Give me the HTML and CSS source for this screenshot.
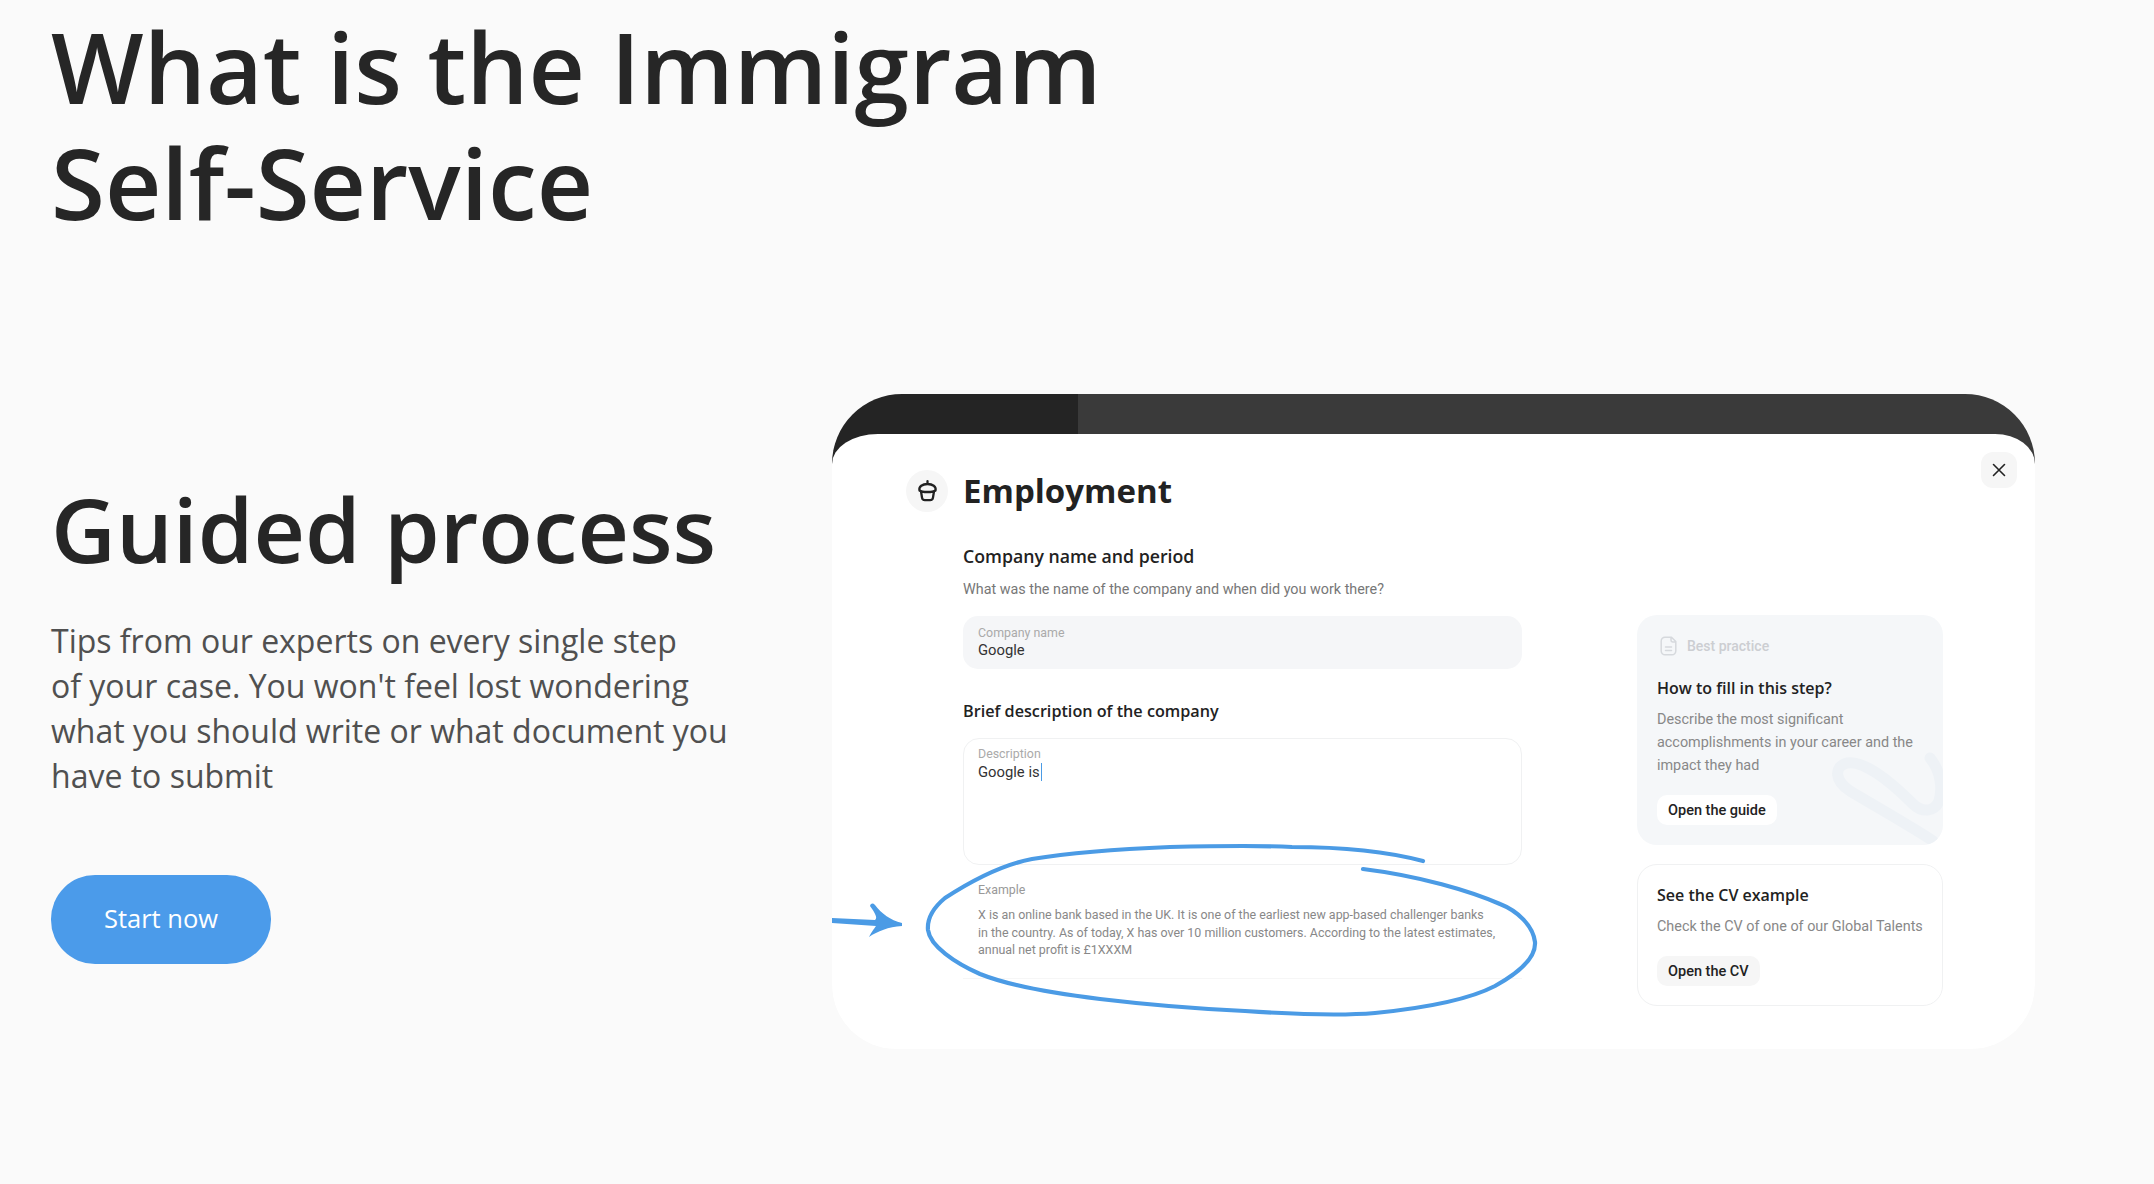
FILE: index.html
```html
<!DOCTYPE html>
<html lang="en">
<head>
<meta charset="utf-8">
<title>Immigram Self-Service</title>
<link rel="stylesheet" href="styles.css">
</head>
<body>
<main class="page">
  <h1 class="headline">What is the Immigram<br>Self-Service</h1>
  <section class="feature">
    <div class="intro">
      <h2 class="intro-title">Guided process</h2>
      <p class="intro-text">Tips from our experts on every single step<br>of your case. You won't feel lost wondering<br>what you should write or what document you<br>have to submit</p>
      <a class="cta">Start now</a>
    </div>
    <div class="window">
      <div class="panel">
        <button class="close" aria-label="Close">
          <svg width="14" height="14" viewBox="0 0 14 14"><path d="M1.5 1.5l11 11M12.5 1.5l-11 11" fill="none" stroke="#222" stroke-width="1.6" stroke-linecap="round"/></svg>
        </button>
        <header class="panel-head">
          <span class="bag">
            <svg width="21" height="22" viewBox="0 0 20 22"><path d="M10 1.200v2.600M2 10.500C1 6.500 5 4 10 4s9 2.500 8 6.500M2 10.500c2.500 2 13.500 2 16 0M3.600 12l.9 5.500a3 3 0 0 0 3 2.700h5a3 3 0 0 0 3-2.700l.9-5.500" fill="none" stroke="#222" stroke-width="2.300" stroke-linecap="round" stroke-linejoin="round"/></svg>
          </span>
          <h3 class="panel-title">Employment</h3>
        </header>
        <div class="panel-body">
          <div class="form">
            <h4 class="form-title">Company name and period</h4>
            <p class="form-hint">What was the name of the company and when did you work there?</p>
            <div class="field field-filled">
              <span class="field-label">Company name</span>
              <span class="field-value">Google</span>
            </div>
            <h4 class="form-title form-title-second">Brief description of the company</h4>
            <div class="field field-area">
              <span class="field-label">Description</span>
              <span class="field-value"><span class="caret">Google is</span></span>
            </div>
            <div class="example">
              <span class="field-label example-label">Example</span>
              <p class="example-text">X is an online bank based in the UK. It is one of the earliest new app-based challenger banks<br>in the country. As of today, X has over 10 million customers. According to the latest estimates,<br>annual net profit is £1XXXM</p>
            </div>
          </div>
          <aside class="side">
            <div class="card card-tint">
              <svg class="scribble" width="306" height="230" viewBox="0 0 306 230"><path d="M296 226C280 215 250 198 213 176C198 166 196 152 210 148C225 145 250 163 276 189C285 198 298 197 302 186C306 172 303 155 293 143" fill="none" stroke="#eef2f6" stroke-width="11" stroke-linecap="round"/></svg>
              <div class="card-tag">
                <svg width="17" height="20" viewBox="0 0 17 20"><path d="M5 1.200h6.500l4.300 4.300V15a3.800 3.800 0 0 1-3.800 3.800H5A3.800 3.800 0 0 1 1.200 15V5A3.800 3.800 0 0 1 5 1.200zM11 1.500V4a2 2 0 0 0 2 2h2.800M5.500 11h6M5.500 14.500h6" fill="none" stroke="#d6d9dd" stroke-width="1.500" stroke-linecap="round" stroke-linejoin="round"/></svg>
                <span>Best practice</span>
              </div>
              <h5 class="card-title">How to fill in this step?</h5>
              <p class="card-text">Describe the most significant accomplishments in your career and the impact they had</p>
              <a class="card-btn card-btn-white">Open the guide</a>
            </div>
            <div class="card card-line">
              <h5 class="card-title card-title-flush">See the CV example</h5>
              <p class="card-text">Check the CV of one of our Global Talents</p>
              <a class="card-btn card-btn-grey">Open the CV</a>
            </div>
          </aside>
        </div>
        <svg class="marks" width="1203" height="615" viewBox="832 433 1203 615">
          <path d="M1423 860C1385 850 1340 846 1292 846C1255 844 1212 845 1170 846C1120 848 1075 851 1032 858C1000 864 965 884 945 897C933 907 927 918 928 929C930 945 955 962 980 973C1010 985 1050 992 1100 998C1150 1004 1200 1008 1245 1010C1290 1013 1340 1015 1375 1012C1425 1007 1470 998 1495 985C1522 970 1536 955 1535 941C1533 925 1518 910 1500 903C1470 890 1420 875 1363 868" fill="none" stroke="#4b9be5" stroke-width="4.200" stroke-linecap="round"/>
          <path d="M832 917L875 919C878 917 875 912 870 905C871 902 873 902 875 904C882 913 890 919 902 922L902 925C888 926 878 930 869 936C872 930 874 928 876 925L832 922Z" fill="#4b9be5"/>
        </svg>
      </div>
    </div>
  </section>
</main>
</body>
</html>
```
FILE: styles.css
```css
* { box-sizing: border-box; }
html, body { margin: 0; height: 100%; }
body {
  background: #fafafa;
  color: #262626;
  font-family: "Open Sans", "Noto Sans", sans-serif;
  overflow: hidden;
}
.page { padding: 8px 0 0 51px; height: 1184px; }
.headline {
  margin: 0;
  font-size: 98px;
  line-height: 116px;
  font-weight: 600;
  color: #262626;
}
.feature {
  display: flex;
  align-items: flex-start;
  margin-top: 154px;
}
.intro { width: 781px; padding-top: 82px; flex: none; }
.intro-title {
  margin: 0;
  font-size: 89.500px;
  line-height: 104px;
  font-weight: 600;
  color: #262626;
}
.intro-text {
  margin: 38px 0 0;
  font-size: 32px;
  line-height: 45px;
  color: #505050;
}
.cta {
  display: flex;
  align-items: center;
  justify-content: center;
  width: 220px;
  height: 89px;
  margin-top: 77px;
  padding-bottom: 3px;
  border-radius: 44px;
  background: #4b9bea;
  color: #fff;
  font-size: 25.500px;
  font-weight: 500;
}
.window {
  width: 1203px;
  height: 655px;
  flex: none;
  padding-top: 40px;
  border-radius: 70px 70px 64px 64px;
  overflow: hidden;
  background: linear-gradient(to right, #242424 246px, #3a3a3a 246px) top left / 100% 100px no-repeat;
}
.panel {
  position: relative;
  height: 615px;
  background: #fff;
  border-radius: 46px 40px 64px 64px / 30px 30px 64px 64px;
  padding: 36px 0 0 74px;
}
.close {
  position: absolute;
  top: 18px;
  right: 18px;
  width: 36px;
  height: 36px;
  padding: 0;
  border: 0;
  border-radius: 12px;
  background: #f6f6f6;
  display: flex;
  align-items: center;
  justify-content: center;
}
.panel-head { display: flex; align-items: center; gap: 15px; height: 42px; }
.bag {
  width: 42px;
  height: 42px;
  border-radius: 50%;
  background: #f6f6f6;
  display: flex;
  align-items: center;
  justify-content: center;
}
.panel-title {
  margin: 0;
  font-size: 33px;
  line-height: 42px;
  font-weight: 700;
  color: #222;
}
.panel-body {
  display: flex;
  padding-left: 57px;
  margin-top: 32px;
  position: relative;
}
.form { width: 559px; flex: none; }
.form-title {
  margin: 0;
  font-size: 17.700px;
  line-height: 24px;
  font-weight: 600;
  color: #222;
}
.form-title-second { margin-top: 30.500px; font-size: 16.200px; }
.form-hint {
  margin: 12px 0 0;
  font-family: "Roboto", sans-serif;
  font-size: 14.350px;
  line-height: 20px;
  color: #777;
}
.field {
  display: flex;
  flex-direction: column;
  font-family: "Roboto", sans-serif;
  padding: 9px 15px;
  border-radius: 15px;
}
.field-filled { height: 53px; margin-top: 15.500px; background: #f5f6f8; }
.field-area {
  height: 127px;
  margin-top: 15px;
  border: 1px solid #f0f1f2;
  border-radius: 16px;
  padding: 7px 14px;
}
.field-label { font-size: 12.400px; line-height: 15px; color: #aaa; }
.field-value { margin-top: 1.500px; font-size: 14.800px; line-height: 18px; color: #333; }
.caret { border-right: 1px solid #4b9be5; padding-right: 1px; }
.example {
  height: 114px;
  padding: 17px 15px 0;
  border-bottom: 1px solid #f6f6f6;
  font-family: "Roboto", sans-serif;
}
.example-label { display: block; color: #999; }
.example-text {
  margin: 9px 0 0;
  font-size: 12.450px;
  line-height: 17.500px;
  color: #888;
}
.side {
  margin-left: 115px;
  width: 306px;
  display: flex;
  flex-direction: column;
  gap: 19px;
  margin-top: 71px;
}
.card {
  position: relative;
  border-radius: 20px;
  padding: 0 20px;
  overflow: hidden;
}
.card-tint { height: 230px; background: #f5f7f9; }
.card-line { height: 142px; border: 1px solid #f0f1f2; padding: 0 19px; }
.scribble { position: absolute; left: 0; top: 0; }
.card-tag {
  position: relative;
  display: flex;
  align-items: center;
  gap: 10px;
  height: 20px;
  margin-top: 21px;
  padding-left: 3px;
  color: #ccced2;
  font-family: "Roboto", sans-serif;
  font-size: 14px;
  font-weight: 500;
}
.card-title {
  position: relative;
  margin: 21px 0 0;
  font-size: 16px;
  line-height: 22px;
  font-weight: 600;
  color: #222;
}
.card-title-flush { margin-top: 19px; }
.card-text {
  position: relative;
  margin: 9px 0 0;
  font-family: "Roboto", sans-serif;
  font-size: 14.400px;
  line-height: 23px;
  color: #888;
}
.card-btn {
  position: relative;
  display: inline-flex;
  align-items: center;
  height: 30px;
  margin-top: 18px;
  padding: 0 11px;
  border-radius: 10px;
  font-family: "Roboto", sans-serif;
  font-size: 14.500px;
  font-weight: 500;
  color: #222;
}
.card-btn-white { background: #fff; }
.card-btn-grey { background: #f6f6f6; }
.marks { position: absolute; left: 0; top: 0; pointer-events: none; }
```
